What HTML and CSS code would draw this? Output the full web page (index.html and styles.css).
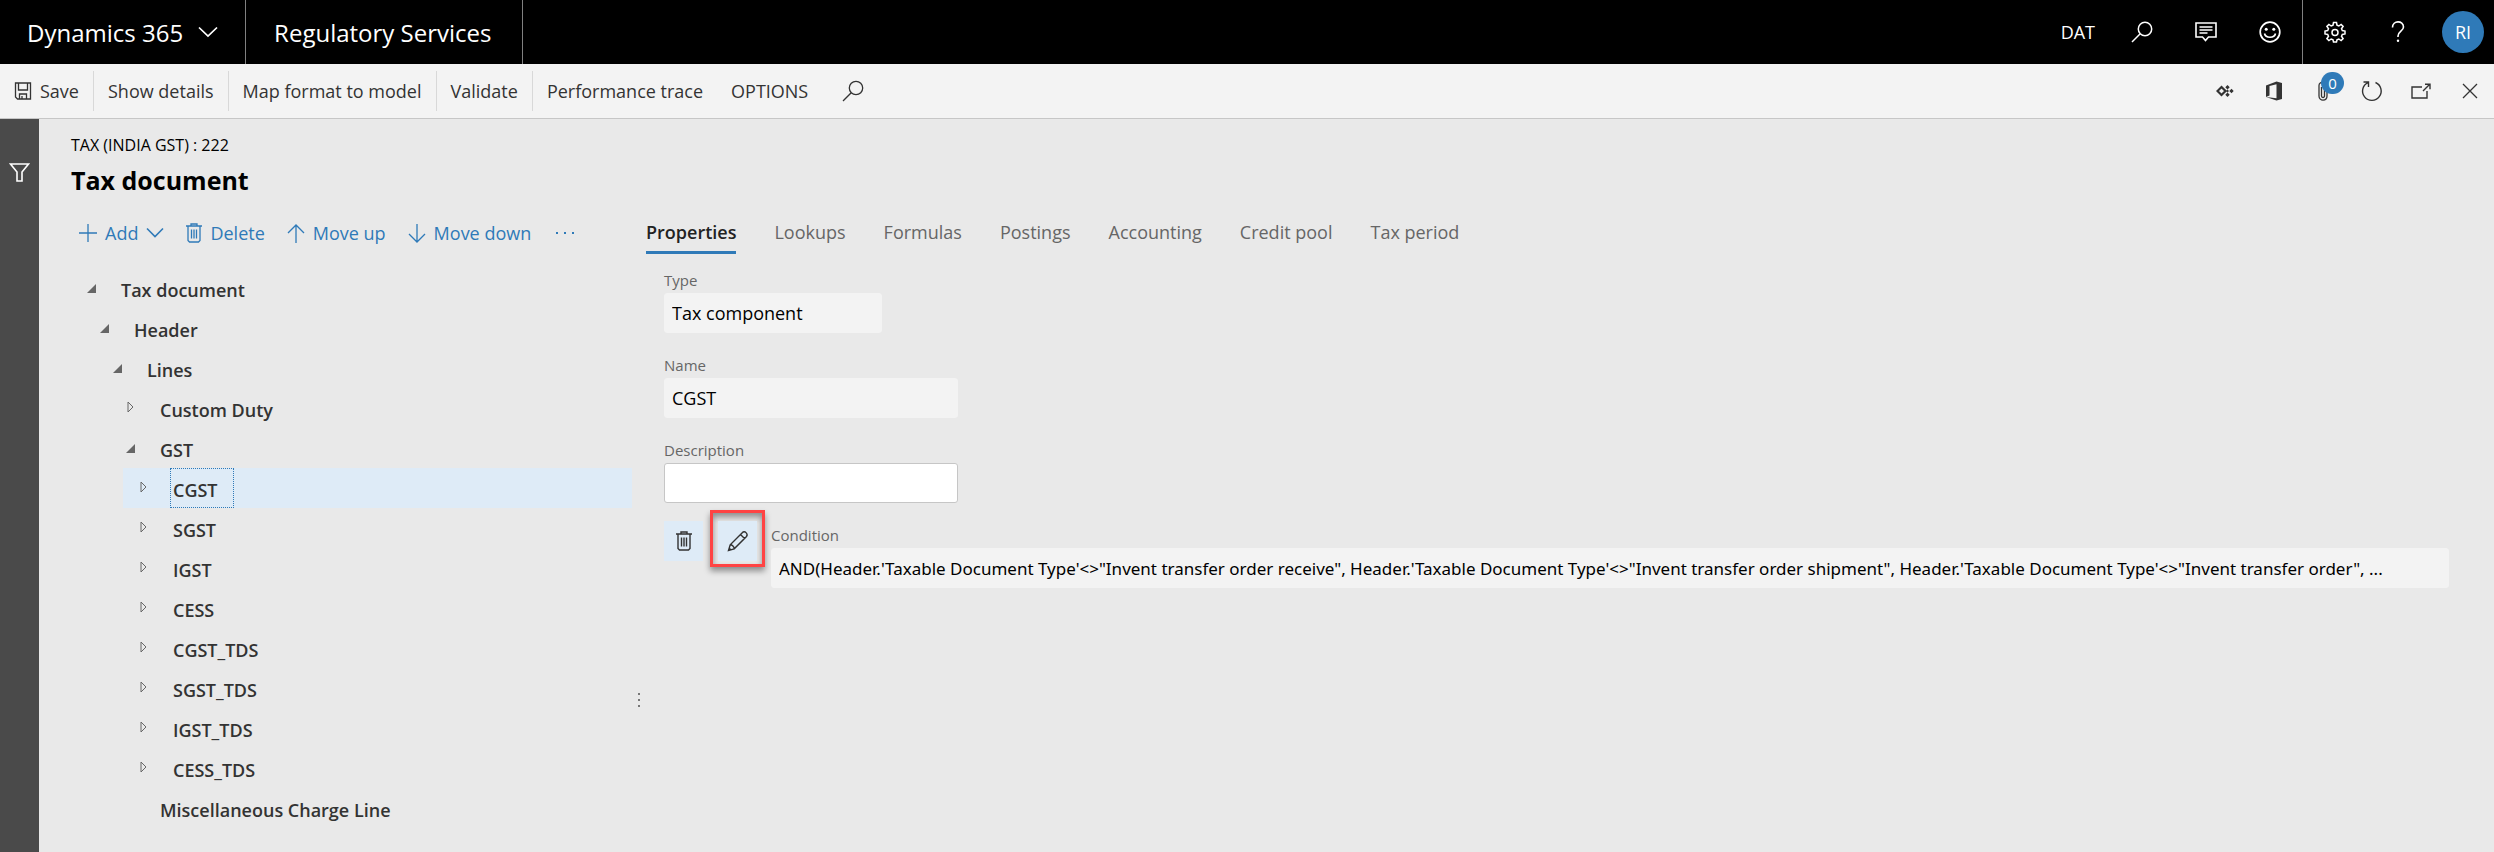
FILE: index.html
```html
<!DOCTYPE html>
<html lang="en">
<head>
  <meta charset="UTF-8">
  <title>Tax document - Regulatory Services</title>
  <meta name="viewport" content="width=device-width, initial-scale=1.0">
  <link rel="stylesheet" href="styles.css">
</head>
<body>
  <header class="topbar">
    <button class="brand" type="button">
      Dynamics 365
      <svg class="icon" width="20" height="12" viewBox="0 0 20 12"><path d="M1 1.500l9 8.500 9-8.500" stroke-width="1.700"/></svg>
    </button>
    <a class="app-name" href="#">Regulatory Services</a>
    <nav class="topbar-right">
      <button class="company" type="button">DAT</button>
      <button class="top-icon" type="button" aria-label="Search">
        <svg class="icon" width="22" height="22" viewBox="0 0 22 22"><circle cx="14" cy="8" r="6.700" stroke-width="1.500"/><path d="M9.200 12.800L1 21" stroke-width="1.500"/></svg>
      </button>
      <button class="top-icon" type="button" aria-label="Messages">
        <svg class="icon" width="22" height="20" viewBox="0 0 22 20"><path d="M1 1h20v14h-7.500l-3 3.500-3-3.500H1z" stroke-width="1.600"/><path d="M4.500 5h13M4.500 8h13M4.500 11h8" stroke-width="1.500"/></svg>
      </button>
      <button class="top-icon" type="button" aria-label="Feedback">
        <svg class="icon" width="22" height="22" viewBox="0 0 22 22"><circle cx="11" cy="11" r="9.800" stroke-width="1.700"/><circle class="fill" cx="7.200" cy="8.200" r="1.500"/><circle class="fill" cx="14.800" cy="8.200" r="1.500"/><path d="M5.500 12.500c1 5 10 5 11 0" stroke-width="1.600"/></svg>
      </button>
      <button class="top-icon settings" type="button" aria-label="Settings">
        <svg class="icon" width="22" height="22" viewBox="0 0 22 22"><path d="M9.500 1.500h3l.5 2.700 1.800.8 2.300-1.600 2 2-1.600 2.300.8 1.800 2.700.5v3l-2.700.5-.8 1.800 1.600 2.300-2 2-2.300-1.600-1.800.8-.5 2.200h-3l-.5-2.200-1.800-.8-2.300 1.600-2-2 1.600-2.300-.8-1.800-2.700-.5v-3l2.700-.5.8-1.800-1.600-2.300 2-2L7.200 5l1.800-.8z" stroke-width="1.500"/><circle cx="11" cy="11.500" r="3" stroke-width="1.500"/></svg>
      </button>
      <button class="top-icon" type="button" aria-label="Help">
        <svg class="icon" width="14" height="22" viewBox="0 0 14 22"><path d="M1.500 6.500C1.500-1 12.500-.8 12.500 6c0 4-5.500 4.500-5.500 9v1" stroke-width="1.600"/><circle class="fill" cx="7" cy="19.800" r="1.200"/></svg>
      </button>
      <button class="avatar" type="button">RI</button>
    </nav>
  </header>

  <div class="toolbar">
    <button class="tool save" type="button">
      <svg class="icon" width="18" height="18" viewBox="0 0 17 18"><path d="M1 1h15v16H3l-2-2zM4 1v7h9V1M5 17v-5h7v5M7.500 14v3" stroke-width="1.300"/></svg>
      Save
    </button>
    <button class="tool" type="button">Show details</button>
    <button class="tool" type="button">Map format to model</button>
    <button class="tool" type="button">Validate</button>
    <button class="tool" type="button">Performance trace</button>
    <button class="tool" type="button">OPTIONS</button>
    <button class="tool search" type="button" aria-label="Search actions">
      <svg class="icon" width="22" height="22" viewBox="0 0 22 22"><circle cx="14" cy="8" r="6.700" stroke-width="1.300"/><path d="M9.200 12.800L1 21" stroke-width="1.300"/></svg>
    </button>
    <div class="toolbar-right">
      <button class="tool-icon" type="button" aria-label="Connector">
        <svg class="icon" width="18" height="12" viewBox="0 0 18 12"><path d="M5.500 2L9.500 6l-4 4-4-4z" stroke-width="2.200"/><path class="fill" d="M11.500 0l2.200 2.200-2.200 2.200-2.200-2.200zM11.500 7.600l2.200 2.200-2.200 2.200-2.200-2.200zM15.500 3.800L17.700 6l-2.200 2.200L13.300 6zM11.500 4.500L13 6l-1.500 1.500L10 6z"/></svg>
      </button>
      <button class="tool-icon" type="button" aria-label="Office">
        <svg class="icon" width="18" height="20" viewBox="0 0 18 20"><path class="fill" fill-rule="evenodd" d="M1 4.500L11.500.5 17 2v16l-5.500 1.500L1 16l10.500 1.200V3.300L4.500 5v9.500L1 16z"/></svg>
      </button>
      <button class="tool-icon attach" type="button" aria-label="Attachments">
        <svg class="icon" width="10" height="20" viewBox="0 0 10 20"><path d="M1 15V4.500c0-4.500 8-4.500 8 0V15c0 5.500-8 5.500-8 0M3.500 6v9c0 2 3 2 3 0V5" stroke-width="1.300"/></svg>
        <span class="badge">0</span>
      </button>
      <button class="tool-icon" type="button" aria-label="Refresh">
        <svg class="icon" width="22" height="22" viewBox="0 0 22 22"><path d="M14.500 2.500A9.300 9.300 0 1 1 7 2.600M2.500 2h5v5" stroke-width="1.400"/></svg>
      </button>
      <button class="tool-icon" type="button" aria-label="Open in new window">
        <svg class="icon" width="20" height="16" viewBox="0 0 20 16"><path d="M11 4H1v11h15V8M12 8l6.500-6.500M14 1.200h5v5" stroke-width="1.400"/></svg>
      </button>
      <button class="tool-icon" type="button" aria-label="Close">
        <svg class="icon" width="16" height="16" viewBox="0 0 16 16"><path d="M1 1l14 14M15 1L1 15" stroke-width="1.300"/></svg>
      </button>
    </div>
  </div>

  <div class="page">
    <aside class="filter-pane">
      <button class="filter" type="button" aria-label="Show filters">
        <svg class="icon" width="21" height="19" viewBox="0 0 20 19"><path d="M1 1h18l-6.500 8v9h-5V9z" stroke-width="1.600"/></svg>
      </button>
    </aside>

    <main class="content">
      <p class="caption">TAX (INDIA GST) : 222</p>
      <h1>Tax document</h1>

      <div class="columns">
        <section class="tree-panel">
          <div class="actions">
            <button class="action add" type="button">
              <svg class="icon" width="18" height="18" viewBox="0 0 18 18"><path d="M9 0v18M0 9h18" stroke-width="1.300"/></svg>
              Add
              <svg class="icon" width="18" height="12" viewBox="0 0 18 12"><path d="M1 1.500l8 8 8-8" stroke-width="1.600"/></svg>
            </button>
            <button class="action" type="button">
              <svg class="icon" width="16" height="20" viewBox="0 0 16 20"><path d="M0 3h16M5 3V1h6v2M2 3v14.500L3.500 19h9l1.500-1.500V3M5.500 6.500v9M8 6.500v9M10.500 6.500v9" stroke-width="1.300"/></svg>
              Delete
            </button>
            <button class="action" type="button">
              <svg class="icon" width="18" height="19" viewBox="0 0 18 19"><path d="M9 19V1M1 9l8-8 8 8" stroke-width="1.300"/></svg>
              Move up
            </button>
            <button class="action" type="button">
              <svg class="icon" width="18" height="19" viewBox="0 0 18 19"><path d="M9 0v18M1 10l8 8 8-8" stroke-width="1.300"/></svg>
              Move down
            </button>
            <button class="action more" type="button" aria-label="More">
              <svg class="icon" width="20" height="4" viewBox="0 0 20 4"><path class="fill" d="M1 1h2v2H1zM9 1h2v2H9zM17 1h2v2h-2z"/></svg>
            </button>
          </div>

          <ul class="tree">
            <li>
              <div class="row"><span class="twisty open"></span><button class="node" type="button">Tax document</button></div>
              <ul>
                <li>
                  <div class="row"><span class="twisty open"></span><button class="node" type="button">Header</button></div>
                  <ul>
                    <li>
                      <div class="row"><span class="twisty open"></span><button class="node" type="button">Lines</button></div>
                      <ul>
                        <li><div class="row"><span class="twisty"><svg class="icon" width="7" height="12" viewBox="0 0 7 12"><path d="M1 1l5 5-5 5z"/></svg></span><button class="node" type="button">Custom Duty</button></div></li>
                        <li>
                          <div class="row"><span class="twisty open"></span><button class="node" type="button">GST</button></div>
                          <ul>
                            <li><div class="row selected"><span class="twisty"><svg class="icon" width="7" height="12" viewBox="0 0 7 12"><path d="M1 1l5 5-5 5z"/></svg></span><button class="node" type="button">CGST</button></div></li>
                            <li><div class="row"><span class="twisty"><svg class="icon" width="7" height="12" viewBox="0 0 7 12"><path d="M1 1l5 5-5 5z"/></svg></span><button class="node" type="button">SGST</button></div></li>
                            <li><div class="row"><span class="twisty"><svg class="icon" width="7" height="12" viewBox="0 0 7 12"><path d="M1 1l5 5-5 5z"/></svg></span><button class="node" type="button">IGST</button></div></li>
                            <li><div class="row"><span class="twisty"><svg class="icon" width="7" height="12" viewBox="0 0 7 12"><path d="M1 1l5 5-5 5z"/></svg></span><button class="node" type="button">CESS</button></div></li>
                            <li><div class="row"><span class="twisty"><svg class="icon" width="7" height="12" viewBox="0 0 7 12"><path d="M1 1l5 5-5 5z"/></svg></span><button class="node" type="button">CGST_TDS</button></div></li>
                            <li><div class="row"><span class="twisty"><svg class="icon" width="7" height="12" viewBox="0 0 7 12"><path d="M1 1l5 5-5 5z"/></svg></span><button class="node" type="button">SGST_TDS</button></div></li>
                            <li><div class="row"><span class="twisty"><svg class="icon" width="7" height="12" viewBox="0 0 7 12"><path d="M1 1l5 5-5 5z"/></svg></span><button class="node" type="button">IGST_TDS</button></div></li>
                            <li><div class="row"><span class="twisty"><svg class="icon" width="7" height="12" viewBox="0 0 7 12"><path d="M1 1l5 5-5 5z"/></svg></span><button class="node" type="button">CESS_TDS</button></div></li>
                          </ul>
                        </li>
                        <li><div class="row"><span class="twisty"></span><button class="node" type="button">Miscellaneous Charge Line</button></div></li>
                      </ul>
                    </li>
                  </ul>
                </li>
              </ul>
            </li>
          </ul>
        </section>

        <div class="splitter"><span></span><span></span><span></span></div>

        <section class="details">
          <nav class="tabs">
            <a class="tab active" href="#">Properties</a>
            <a class="tab" href="#">Lookups</a>
            <a class="tab" href="#">Formulas</a>
            <a class="tab" href="#">Postings</a>
            <a class="tab" href="#">Accounting</a>
            <a class="tab" href="#">Credit pool</a>
            <a class="tab" href="#">Tax period</a>
          </nav>

          <form class="fields">
            <div class="field short">
              <label for="type">Type</label>
              <input id="type" type="text" value="Tax component" readonly>
            </div>
            <div class="field">
              <label for="name">Name</label>
              <input id="name" type="text" value="CGST" readonly>
            </div>
            <div class="field">
              <label for="description">Description</label>
              <input id="description" type="text">
            </div>
            <div class="condition">
              <button class="square" type="button" aria-label="Delete condition">
                <svg class="icon" width="16" height="20" viewBox="0 0 16 20"><path d="M0 3h16M5 3V1h6v2M2 3v14.500L3.500 19h9l1.500-1.500V3M5.500 6.500v9M8 6.500v9M10.500 6.500v9" stroke-width="1.400"/></svg>
              </button>
              <div class="highlight">
                <button class="square" type="button" aria-label="Edit condition">
                  <svg class="icon" width="22" height="22" viewBox="0 0 22 22"><path d="M1.500 20.500l1.700-5.700L15.500 2.500c2-2.500 6 1.500 4 4L7.200 18.800zM3.200 14.800c2 0 4 2 4 4M13.500 4.500l4 4M1.500 20.500l2-2" stroke-width="1.400"/></svg>
                </button>
              </div>
              <div class="field wide">
                <label for="condition">Condition</label>
                <input id="condition" type="text" value="AND(Header.'Taxable Document Type'&lt;&gt;&quot;Invent transfer order receive&quot;, Header.'Taxable Document Type'&lt;&gt;&quot;Invent transfer order shipment&quot;, Header.'Taxable Document Type'&lt;&gt;&quot;Invent transfer order&quot;, ..." readonly>
              </div>
            </div>
          </form>
        </section>
      </div>
    </main>
  </div>
</body>
</html>
```

FILE: styles.css
```css
* {
  box-sizing: border-box;
}
body {
  margin: 0;
  min-height: 100vh;
  display: flex;
  flex-direction: column;
  font-family: "Open Sans", "Noto Sans", sans-serif;
  font-size: 18px;
  color: #333;
  background: #e9e9e9;
}
button {
  font: inherit;
  color: inherit;
  background: none;
  border: none;
  padding: 0;
  cursor: pointer;
  white-space: nowrap;
}
a {
  color: inherit;
  text-decoration: none;
}
ul {
  list-style: none;
  margin: 0;
  padding: 0;
}
.icon {
  fill: none;
  stroke: currentColor;
  flex: none;
}
.icon .fill {
  fill: currentColor;
  stroke: none;
}

/* black bar */
.topbar {
  display: flex;
  height: 64px;
  background: #000;
  color: #fff;
}
.brand,
.app-name {
  display: flex;
  align-items: center;
  padding: 0 27px;
  font-size: 24px;
  border-right: 1px solid #808080;
}
.brand {
  gap: 15px;
}
.app-name {
  padding: 0 30px 0 28px;
}
.topbar-right {
  display: flex;
  align-items: center;
  margin-left: auto;
  padding-right: 10px;
}
.company {
  margin-right: 15px;
}
.top-icon {
  display: flex;
  align-items: center;
  justify-content: center;
  width: 64px;
  height: 64px;
}
.settings {
  border-left: 1px solid #808080;
}
.avatar {
  width: 42px;
  height: 42px;
  margin-left: 12px;
  border-radius: 50%;
  background: #2f7ab8;
}

/* action bar */
.toolbar {
  display: flex;
  align-items: center;
  height: 55px;
  background: #f3f3f3;
  border-bottom: 1px solid #c6c6c6;
}
.tool {
  display: flex;
  align-items: center;
  gap: 8px;
  height: 40px;
  padding: 0 14px;
  border-right: 1px solid #d8d8d8;
}
.tool:nth-child(n+5) {
  border-right: none;
}
.search {
  padding: 0 20px;
}
.toolbar-right {
  display: flex;
  align-items: center;
  margin-left: auto;
}
.tool-icon {
  position: relative;
  display: flex;
  align-items: center;
  justify-content: center;
  width: 49px;
  height: 54px;
}
.badge {
  position: absolute;
  top: 8px;
  right: 3px;
  width: 23px;
  height: 22px;
  border-radius: 11px;
  background: #2f7ab8;
  color: #fff;
  font-size: 15px;
  line-height: 22px;
}

/* page */
.page {
  display: flex;
  flex: 1;
}
.filter-pane {
  flex: 0 0 39px;
  background: #4a4a4a;
  color: #fff;
}
.filter {
  display: block;
  margin: 44px 9px;
  height: 19px;
}
.filter .icon {
  display: block;
}
.content {
  flex: 1;
  min-width: 0;
  padding: 14px 45px 0 32px;
}
.caption {
  margin: 0;
  font-size: 16px;
  line-height: 24px;
  color: #000;
}
h1 {
  margin: 5px 0 0;
  font-size: 25px;
  line-height: 36px;
  font-weight: 700;
  color: #000;
}
.columns {
  display: flex;
  margin-top: 15px;
}
.tree-panel {
  flex: 0 0 561px;
}
.actions {
  display: flex;
  align-items: center;
  height: 40px;
  gap: 22px;
  padding-left: 8px;
  color: #2f7ab8;
}
.action {
  display: flex;
  align-items: center;
  gap: 8px;
}
.more {
  margin-left: 2px;
}

/* tree */
.tree {
  margin-top: 15px;
}
.tree ul {
  padding-left: 13px;
}
.row {
  display: flex;
  height: 40px;
}
.selected {
  background: #deebf7;
}
.twisty {
  display: flex;
  align-items: center;
  width: 47px;
  padding: 0 0 2px 17px;
  color: #666;
}
.twisty.open {
  padding: 0 0 0 16px;
}
.twisty.open::before {
  content: "";
  border-left: 9px solid transparent;
  border-bottom: 9px solid #666;
}
.node {
  padding: 3px 15px 0 2px;
  border: 1px solid transparent;
  font-weight: 600;
}
.selected .node {
  border: 1px dotted #2f7ab8;
}

.splitter {
  display: flex;
  flex-direction: column;
  align-items: center;
  align-self: flex-end;
  gap: 4px;
  width: 14px;
  padding-bottom: 121px;
}
.splitter span {
  width: 2px;
  height: 2px;
  background: #777;
}

/* details */
.details {
  flex: 1;
  min-width: 0;
}
.tabs {
  display: flex;
  gap: 38px;
  color: #666;
}
.tab {
  height: 41px;
  line-height: 39px;
}
.active {
  color: #222;
  font-weight: 600;
  border-bottom: 3px solid #2f7ab8;
}
.fields {
  margin: 14px 0 0 18px;
}
.field {
  width: 294px;
}
.field + .field {
  margin-top: 20px;
}
.short {
  width: 218px;
}
.field label {
  display: block;
  font-size: 15px;
  line-height: 25px;
  color: #666;
}
.field input {
  display: block;
  width: 100%;
  height: 40px;
  padding: 0 7px;
  border: 1px solid #c6c6c6;
  border-radius: 3px;
  background: #fff;
  font: inherit;
  color: #000;
  text-overflow: ellipsis;
}
.field input:read-only {
  background: #f3f3f3;
  border-color: #f3f3f3;
}
.condition {
  display: flex;
  margin-top: 7px;
}
.square {
  display: flex;
  align-items: center;
  justify-content: center;
  width: 39px;
  height: 40px;
  margin-top: 11px;
  background: #deebf7;
}
.highlight {
  display: flex;
  justify-content: center;
  width: 55px;
  height: 57px;
  margin: 0 6px 0 7px;
  border: 3px solid #ff4343;
  box-shadow: 0 4px 6px rgba(0, 0, 0, 0.4), inset 0 4px 6px rgba(0, 0, 0, 0.4);
}
.highlight .square {
  margin-top: 8px;
}
.wide {
  flex: 1;
  padding-top: 13px;
}
.wide input {
  font-family: "Noto Sans", sans-serif;
  font-size: 17px;
}
```
